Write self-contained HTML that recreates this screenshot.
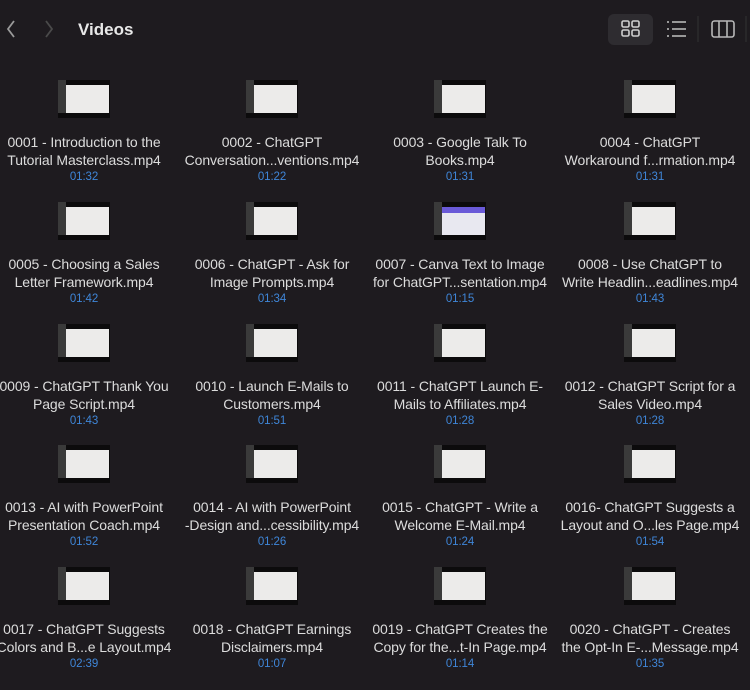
<!DOCTYPE html><html><head><style>
body{margin:0;width:750px;height:690px;background:#1e1b1f;font-family:"Liberation Sans",sans-serif;overflow:hidden;position:relative}
.t{position:absolute;width:188px;text-align:center;color:#dcdcdc;font-size:14px;line-height:18px;white-space:nowrap;letter-spacing:-0.1px}
.d{color:#3f86d8;font-size:11.5px;line-height:16px}
.th{position:absolute;width:52px;height:38px;background:#0c0b0c}
.th i{position:absolute;left:8px;top:5px;width:43px;height:28px;background:#ecebea}
.th b{position:absolute;left:0;top:0;width:8px;height:33px;background:#3a3a3a}
</style></head><body>
<svg width="750" height="60" style="position:absolute;left:0;top:0">
<path d="M14 21 L8 29 L14 37" stroke="#9a9a9a" stroke-width="1.8" fill="none"/>
<path d="M46 21 L52 29 L46 37" stroke="#4a4a4a" stroke-width="1.8" fill="none"/>
<text x="78" y="35" fill="#e8e8e8" font-size="17" font-weight="bold" font-family="Liberation Sans">Videos</text>
<rect x="608" y="14" width="45" height="31" rx="6" fill="#2e2c30"/>
<g stroke="#cfcfcf" stroke-width="1.6" fill="none"><rect x="622" y="21" width="7" height="6" rx="1.5"/><rect x="632" y="21" width="7" height="6" rx="1.5"/><rect x="622" y="30" width="7" height="6" rx="1.5"/><rect x="632" y="30" width="7" height="6" rx="1.5"/></g>
<g stroke="#b8b8b8" stroke-width="1.6"><line x1="667" y1="22" x2="669" y2="22"/><line x1="672" y1="22" x2="686" y2="22"/><line x1="667" y1="29" x2="669" y2="29"/><line x1="672" y1="29" x2="686" y2="29"/><line x1="667" y1="36" x2="669" y2="36"/><line x1="672" y1="36" x2="686" y2="36"/></g>
<line x1="698" y1="16" x2="698" y2="42" stroke="#333" />
<g stroke="#b8b8b8" stroke-width="1.6" fill="none"><rect x="712" y="21" width="22" height="16" rx="2.5"/><line x1="719" y1="21" x2="719" y2="37"/><line x1="727" y1="21" x2="727" y2="37"/></g>
<line x1="746" y1="16" x2="746" y2="42" stroke="#333"/>
</svg>
<div id="g"></div>
<script>
var L=[["0001 - Introduction to the","Tutorial Masterclass.mp4","01:32"],["0002 - ChatGPT","Conversation...ventions.mp4","01:22"],["0003 - Google Talk To","Books.mp4","01:31"],["0004 - ChatGPT","Workaround f...rmation.mp4","01:31"],
["0005 - Choosing a Sales","Letter Framework.mp4","01:42"],["0006 - ChatGPT - Ask for","Image Prompts.mp4","01:34"],["0007 - Canva Text to Image","for ChatGPT...sentation.mp4","01:15"],["0008 - Use ChatGPT to","Write Headlin...eadlines.mp4","01:43"],
["0009 - ChatGPT Thank You","Page Script.mp4","01:43"],["0010 - Launch E-Mails to","Customers.mp4","01:51"],["0011 - ChatGPT Launch E-","Mails to Affiliates.mp4","01:28"],["0012 - ChatGPT Script for a","Sales Video.mp4","01:28"],
["0013 - AI with PowerPoint","Presentation Coach.mp4","01:52"],["0014 - AI with PowerPoint","-Design and...cessibility.mp4","01:26"],["0015 - ChatGPT - Write a","Welcome E-Mail.mp4","01:24"],["0016- ChatGPT Suggests a","Layout and O...les Page.mp4","01:54"],
["0017 - ChatGPT Suggests","Colors and B...e Layout.mp4","02:39"],["0018 - ChatGPT Earnings","Disclaimers.mp4","01:07"],["0019 - ChatGPT Creates the","Copy for the...t-In Page.mp4","01:14"],["0020 - ChatGPT - Creates","the Opt-In E-...Message.mp4","01:35"]];
var cx=[84,272,460,650],h="";
L.forEach(function(e,i){var c=i%4,r=Math.floor(i/4),y=r*121.8;
h+='<div class="th" style="left:'+(cx[c]-26)+'px;top:'+(80+y)+'px"><b></b><i'+(i==6?' style="background:#e8e8f0;border-top:6px solid #6a5ad8;height:22px"':'')+'></i></div>';
h+='<div class="t" style="left:'+(cx[c]-94)+'px;top:'+(133+y)+'px">'+e[0]+'<br>'+e[1]+'<div class="d">'+e[2]+'</div></div>';});
document.getElementById('g').innerHTML=h;
</script>
</body></html>
